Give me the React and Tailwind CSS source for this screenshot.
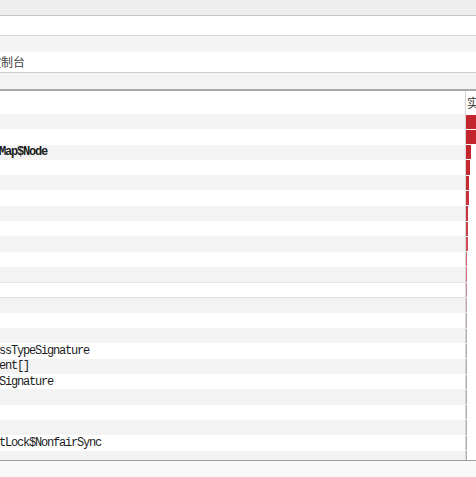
import React from "react";

const rows = [
  { t: "", w: 10, c: "#c3262d" },
  { t: "", w: 10, c: "#c3262d" },
  { t: "Map$Node", b: true, w: 5, c: "#c3262d" },
  { t: "", w: 4, c: "#c52a31" },
  { t: "", w: 3, c: "#c52a31" },
  { t: "", w: 3, c: "#c8323a" },
  { t: "", w: 2, c: "#c8323a" },
  { t: "", w: 2, c: "#cc3e48" },
  { t: "", w: 2, c: "#d04c58" },
  { t: "", w: 1, c: "#d46070" },
  { t: "", w: 1, c: "#d27080" },
  { t: "", w: 1, c: "#c8909c" },
  { t: "", w: 1, c: "#c0a0a8" },
  { t: "", w: 1, c: "#b8a8ae" },
  { t: "", w: 1, c: "#b4aaae" },
  { t: "ssTypeSignature", w: 1, c: "#b0a8ac" },
  { t: "ent[]", w: 1, c: "#b0a8ac" },
  { t: "Signature", w: 1, c: "#b0a8ac" },
  { t: "", w: 1, c: "#b0aaac" },
  { t: "", w: 1, c: "#b0aaac" },
  { t: "", w: 1, c: "#b0aaac" },
  { t: "tLock$NonfairSync", w: 1, c: "#b0aaac" },
  { t: "", w: 1, c: "#b0aaac" },
];

export default function App() {
  return (
    <div className="w-[476px] h-[477px] overflow-hidden bg-white flex flex-col">
      <div className="h-[16px] shrink-0 bg-[#eeeeee] border-b border-[#c6c6c6]" />
      <div className="h-[20px] shrink-0 bg-white border-b border-[#d8d8d8]" />
      <div className="h-[16px] shrink-0 bg-[#f4f4f4]" />
      <div className="h-[21px] shrink-0 bg-white border-b border-[#cdcdcd] flex items-center overflow-hidden">
        <span className="ml-[-11px] text-[12px] leading-none text-[#444] whitespace-nowrap" style={{ fontFamily: '"Noto Sans CJK SC", sans-serif' }}>
          控制台
        </span>
      </div>
      <div className="h-[18px] shrink-0 bg-[#f3f3f3] border-b-2 border-[#a9a9a9]" />
      <div className="h-[370px] shrink-0 flex flex-col border-b border-[#a0a0a0] overflow-hidden">
        <div className="h-[23px] shrink-0 flex bg-white">
          <div className="flex-1" />
          <div className="w-px bg-[#d4d4d4]" />
          <div className="w-[10px] overflow-hidden flex items-center">
            <span className="text-[12px] leading-none text-[#333] whitespace-nowrap pl-[1px]" style={{ fontFamily: '"Noto Sans CJK SC", sans-serif' }}>
              实例数
            </span>
          </div>
        </div>
        {rows.map((r, i) => (
          <div
            key={i}
            className={
              "h-[15.3px] shrink-0 flex " +
              (i % 2 === 0 ? "bg-[#f3f3f3]" : "bg-white") +
              (i === 11 ? " shadow-[inset_0_1px_0_#e2e2e2,inset_0_-1px_0_#e2e2e2]" : "")
            }
          >
            <div className="flex-1 overflow-hidden flex items-center">
              <span
                className={
                  "ml-[-1px] text-[12px] leading-none tracking-[-1.2px] text-[#1c1c1c] whitespace-nowrap " +
                  (r.b ? "font-bold" : "font-normal")
                }
                style={{ fontFamily: '"Liberation Mono", monospace' }}
              >
                {r.t}
              </span>
            </div>
            <div className="w-px bg-[#d8d8d8]" />
            <div className="w-[10px] flex items-stretch py-[0.5px] bg-white">
              <div style={{ width: r.w + "px", backgroundColor: r.c }} />
            </div>
          </div>
        ))}
      </div>
      <div className="flex-1 bg-[#f9f9f9]" />
    </div>
  );
}
